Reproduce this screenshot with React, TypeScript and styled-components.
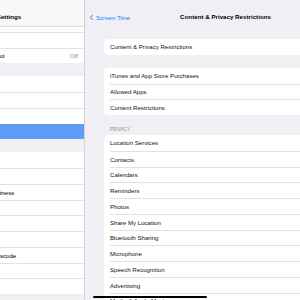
import React, { FC } from "react";
import styled, { createGlobalStyle } from "styled-components";
import { ChevronLeft } from "lucide-react";

const GlobalStyle = createGlobalStyle`
  html, body {
    margin: 0;
    padding: 0;
    background: #efeff4;
    overflow: hidden;
  }
  * {
    box-sizing: border-box;
  }
`;

type TSideRow = { label: string; detail?: string; selected?: boolean };

const sideGroups: TSideRow[][] = [
  [
    { label: "Bluetooth", detail: "On" },
    { label: "Cellular Data" },
    { label: "Personal Hotspot", detail: "Off" },
  ],
  [
    { label: "Notifications" },
    { label: "Sounds" },
    { label: "Do Not Disturb" },
    { label: "Screen Time", selected: true },
  ],
  [
    { label: "General" },
    { label: "Control Center" },
    { label: "Display & Brightness" },
    { label: "Accessibility" },
    { label: "Wallpaper" },
    { label: "Siri & Search" },
    { label: "Touch ID & Passcode" },
    { label: "Battery" },
    { label: "Privacy" },
  ],
];

const detailGroups: { header?: string; rows: string[] }[] = [
  { rows: ["Content & Privacy Restrictions"] },
  {
    rows: [
      "iTunes and App Store Purchases",
      "Allowed Apps",
      "Content Restrictions",
    ],
  },
  {
    header: "PRIVACY",
    rows: [
      "Location Services",
      "Contacts",
      "Calendars",
      "Reminders",
      "Photos",
      "Share My Location",
      "Bluetooth Sharing",
      "Microphone",
      "Speech Recognition",
      "Advertising",
      "Media & Apple Music",
    ],
  },
];

const App: FC = () => {
  return (
    <Screen>
      <GlobalStyle />
      <Sidebar>
        <SideNav>
          <NavTitle>Settings</NavTitle>
        </SideNav>
        <SideScroll>
          {sideGroups.map((group, groupIndex) => (
            <SideGroup key={groupIndex} first={groupIndex === 0}>
              {group.map((row, rowIndex) => (
                <SideRow key={row.label} selected={!!row.selected}>
                  <SideLabel
                    divider={rowIndex > 0 && !row.selected && !group[rowIndex - 1].selected}
                  >
                    <span>{row.label}</span>
                    {row.detail && <SideDetail>{row.detail}</SideDetail>}
                  </SideLabel>
                </SideRow>
              ))}
            </SideGroup>
          ))}
        </SideScroll>
      </Sidebar>

      <Detail>
        <DetailNav>
          <BackButton>
            <ChevronLeft size={9} strokeWidth={2.6} />
            <span>Screen Time</span>
          </BackButton>
          <NavTitle>Content &amp; Privacy Restrictions</NavTitle>
        </DetailNav>
        <DetailBody>
          {detailGroups.map((group, groupIndex) => (
            <Section key={groupIndex} withHeader={!!group.header}>
              {group.header && <SectionHeader>{group.header}</SectionHeader>}
              <Card>
                {group.rows.map((label, rowIndex) => (
                  <CardRow key={label}>
                    <CardLabel divider={rowIndex > 0}>{label}</CardLabel>
                  </CardRow>
                ))}
              </Card>
            </Section>
          ))}
        </DetailBody>
      </Detail>

      <HomeIndicator />
    </Screen>
  );
};

const Screen = styled.div`
  position: relative;
  display: flex;
  width: 300px;
  height: 300px;
  overflow: hidden;
  background: #efeff4;
  font-family: "Liberation Sans", Arial, sans-serif;
  color: #000;
`;

const Sidebar = styled.div`
  flex: 0 0 151px;
  margin-left: -66px;
  display: flex;
  flex-direction: column;
  background: #efeff4;
  border-right: 1px solid #d6d6da;
  overflow: hidden;
`;

const SideNav = styled.div`
  position: relative;
  z-index: 2;
  flex: 0 0 27px;
  display: flex;
  align-items: center;
  justify-content: center;
  padding-top: 8px;
  background: #f8f8f8;
  border-bottom: 1px solid #dcdce0;
`;

const NavTitle = styled.div`
  font-size: 6.2px;
  font-weight: 700;
  line-height: 8px;
  color: #000;
  white-space: nowrap;
`;

const SideScroll = styled.div`
  flex: 1;
  display: flex;
  flex-direction: column;
  gap: 13px;
`;

const SideGroup = styled.div<{ first: boolean }>`
  margin-top: ${(p) => (p.first ? "-11px" : "0")};
  background: #fff;
`;

const SideRow = styled.div<{ selected: boolean }>`
  height: 15.75px;
  padding-left: 24px;
  background: ${(p) => (p.selected ? "#5e9cf6" : "#fff")};
  color: ${(p) => (p.selected ? "#fff" : "#000")};
`;

const SideLabel = styled.div<{ divider: boolean }>`
  height: 100%;
  display: flex;
  align-items: center;
  justify-content: space-between;
  padding-right: 6px;
  font-size: 6.1px;
  white-space: nowrap;
  border-top: ${(p) => (p.divider ? "0.5px solid #e2e2e6" : "none")};
`;

const SideDetail = styled.span`
  color: #8e8e93;
`;

const Detail = styled.div`
  flex: 0 0 281px;
  display: flex;
  flex-direction: column;
  background: #efeff4;
`;

const DetailNav = styled.div`
  position: relative;
  flex: 0 0 26px;
  display: flex;
  align-items: center;
  justify-content: center;
  padding-top: 8px;
`;

const BackButton = styled.div`
  position: absolute;
  left: 2px;
  top: 8px;
  height: 18px;
  display: flex;
  align-items: center;
  color: #1a82fb;
  font-size: 6.1px;
  white-space: nowrap;
`;

const DetailBody = styled.div`
  display: flex;
  flex-direction: column;
  padding: 13px 0 0 19px;
  gap: 13px;
`;

const Section = styled.div<{ withHeader: boolean }>`
  display: flex;
  flex-direction: column;
  margin-top: ${(p) => (p.withHeader ? "-13px" : "0")};
`;

const SectionHeader = styled.div`
  height: 20px;
  display: flex;
  align-items: flex-end;
  padding: 0 0 3px 6px;
  font-size: 4.5px;
  line-height: 5px;
  color: #8e8e93;
  letter-spacing: 0.1px;
`;

const Card = styled.div`
  width: 262px;
  background: #fff;
  border-radius: 4px;
  overflow: hidden;
`;

const CardRow = styled.div`
  height: 15.75px;
  padding-left: 6px;
`;

const CardLabel = styled.div<{ divider: boolean }>`
  height: 100%;
  display: flex;
  align-items: center;
  font-size: 6.1px;
  white-space: nowrap;
  color: #111;
  border-top: ${(p) => (p.divider ? "0.5px solid #e2e2e6" : "none")};
`;

const HomeIndicator = styled.div`
  position: absolute;
  left: 93px;
  top: 295.5px;
  width: 114px;
  height: 2.5px;
  border-radius: 2px;
  background: #000;
`;

export default App;
